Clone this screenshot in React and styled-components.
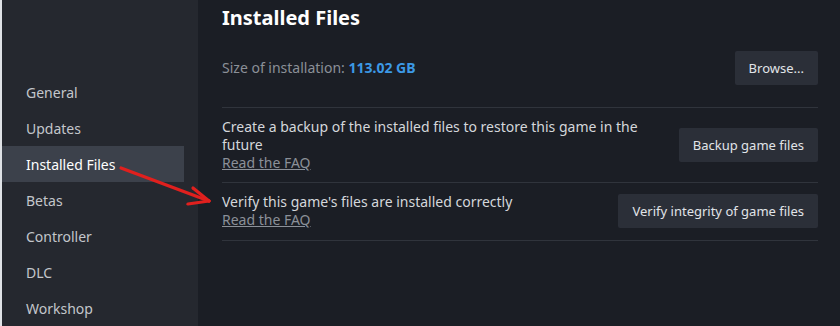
import React from "react";
import styled, { createGlobalStyle } from "styled-components";

const FONT = `"Noto Sans", "Open Sans", Arial, sans-serif`;

const Global = createGlobalStyle`
  html, body { margin: 0; padding: 0; background: #1b1e25; }
  body { font-family: ${FONT}; }
  #root { width: 840px; height: 326px; overflow: hidden; }
`;

const Page = styled.div`
  position: relative;
  display: flex;
  width: 840px;
  height: 326px;
  background: #1b1e25;
`;

const Edge = styled.div`
  width: 2px;
  flex: 0 0 2px;
  background: #dfe2e6;
`;

const Sidebar = styled.nav`
  width: 196px;
  flex: 0 0 196px;
  background: #25282f;
  padding-top: 74px;
  box-sizing: border-box;
  display: flex;
  flex-direction: column;
`;

const NavItem = styled.div`
  flex: 0 0 36px;
  width: 182px;
  height: 36px;
  box-sizing: border-box;
  padding-left: 24px;
  display: flex;
  align-items: center;
  font-size: 14px;
  color: ${(p) => (p.$active ? "#ffffff" : "#c3c6cb")};
  background: ${(p) => (p.$active ? "#3c414b" : "transparent")};
`;

const Main = styled.main`
  flex: 1;
  padding: 0 22px 0 24px;
  display: flex;
  flex-direction: column;
`;

const Title = styled.h1`
  margin: 0 0 4px;
  height: 36px;
  line-height: 36px;
  font-size: 20px;
  font-weight: bold;
  color: #ffffff;
`;

const Row = styled.div`
  display: flex;
  align-items: center;
  justify-content: space-between;
  padding: ${(p) => p.$pad || "10px 0"};
  border-bottom: 1px solid #30343c;
`;

const Info = styled.div`
  display: flex;
  flex-direction: column;
  font-size: 14px;
  line-height: 18px;
  color: #d4d7db;
  max-width: 430px;
`;

const Muted = styled.span`
  color: #8b9098;
  font-size: 14px;
  line-height: 18px;
`;

const Size = styled.span`
  color: #3c99e6;
  font-weight: bold;
`;

const Link = styled.a`
  color: #8b9098;
  text-decoration: underline;
  font-size: 14px;
  line-height: 18px;
`;

const Button = styled.button`
  height: 34px;
  padding: 0 14px;
  border: none;
  border-radius: 2px;
  background: #2b2f38;
  color: #e1e4e8;
  font-family: ${FONT};
  font-size: 13px;
  white-space: nowrap;
`;

const Arrow = styled.svg`
  position: absolute;
  left: 110px;
  top: 158px;
  pointer-events: none;
`;

const items = ["General", "Updates", "Installed Files", "Betas", "Controller", "DLC", "Workshop"];

export default function App() {
  return (
    <>
      <Global />
      <Page>
        <Edge />
        <Sidebar>
          {items.map((it) => (
            <NavItem key={it} $active={it === "Installed Files"}>
              {it}
            </NavItem>
          ))}
        </Sidebar>
        <Main>
          <Title>Installed Files</Title>
          <Row $pad="11px 0 22px">
            <Muted>
              Size of installation: <Size>113.02 GB</Size>
            </Muted>
            <Button>Browse...</Button>
          </Row>
          <Row>
            <Info>
              <span>Create a backup of the installed files to restore this game in the future</span>
              <Link>Read the FAQ</Link>
            </Info>
            <Button>Backup game files</Button>
          </Row>
          <Row $pad="10px 0 11px">
            <Info>
              <span>Verify this game's files are installed correctly</span>
              <Link>Read the FAQ</Link>
            </Info>
            <Button>Verify integrity of game files</Button>
          </Row>
        </Main>
        <Arrow width="110" height="60" viewBox="0 0 110 60">
          <g stroke="#e0201e" strokeWidth="3.2" strokeLinecap="round" fill="none">
            <line x1="11" y1="10" x2="99" y2="43" />
            <line x1="99" y1="43" x2="83" y2="30" />
            <line x1="99" y1="43" x2="78" y2="46" />
          </g>
        </Arrow>
      </Page>
    </>
  );
}
